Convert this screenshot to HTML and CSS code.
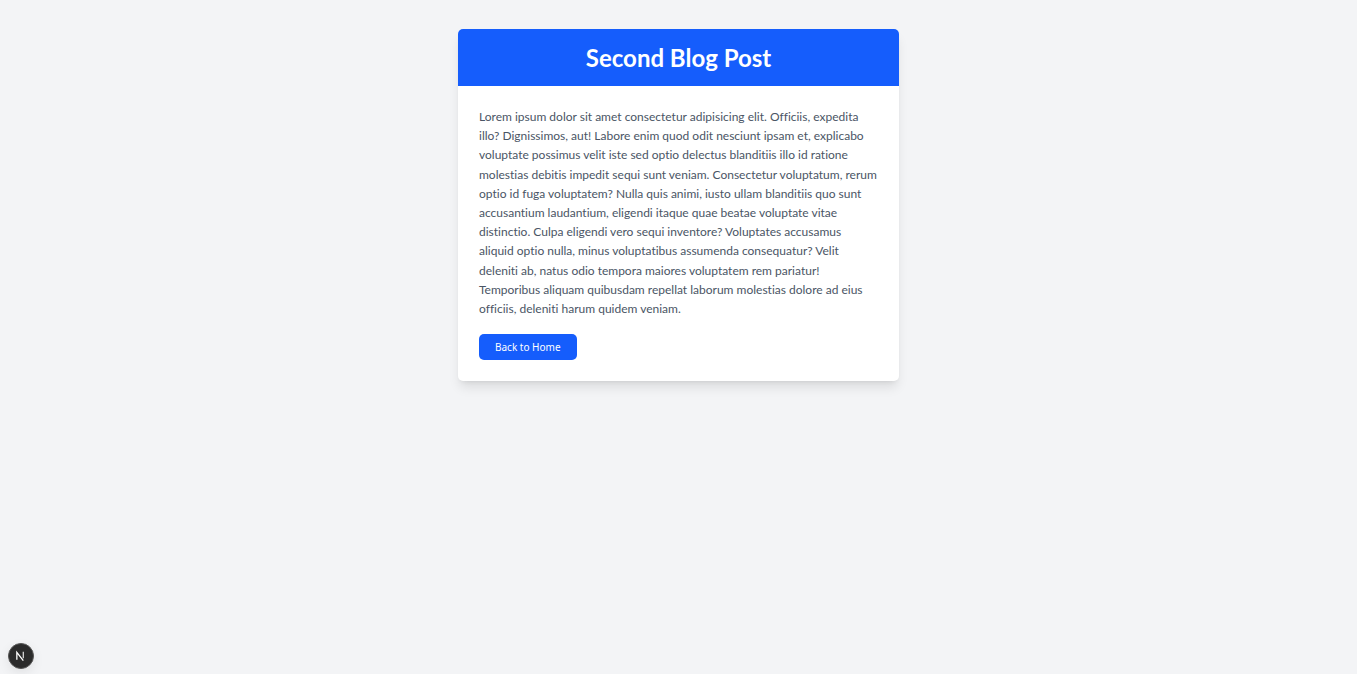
FILE: index.html
```html
<!DOCTYPE html>
<html lang="en">
<head>
<meta charset="utf-8">
<title>Second Blog Post</title>
<link rel="stylesheet" href="styles.css">
</head>
<body>
<main class="page">
  <article class="card">
    <header class="card-header"><h1 class="card-title">Second Blog Post</h1></header>
    <div class="card-body">
      <p class="card-text">Lorem ipsum dolor sit amet consectetur adipisicing elit. Officiis, expedita illo? Dignissimos, aut! Labore enim quod odit nesciunt ipsam et, explicabo voluptate possimus velit iste sed optio delectus blanditiis illo id ratione molestias debitis impedit sequi sunt veniam. Consectetur voluptatum, rerum optio id fuga voluptatem? Nulla quis animi, iusto ullam blanditiis quo sunt accusantium laudantium, eligendi itaque quae beatae voluptate vitae distinctio. Culpa eligendi vero sequi inventore? Voluptates accusamus aliquid optio nulla, minus voluptatibus assumenda consequatur? Velit deleniti ab, natus odio tempora maiores voluptatem rem pariatur! Temporibus aliquam quibusdam repellat laborum molestias dolore ad eius officiis, deleniti harum quidem veniam.</p>
      <a class="home-link" href="#">Back to Home</a>
    </div>
  </article>
</main>
<button class="dev-button" type="button" aria-label="Open developer tools">
  <svg class="dev-icon" viewBox="0 0 26 26" fill="none" aria-hidden="true">
    <path d="M8.5 17V9L15.5 18" stroke="#fff" stroke-width="1.4"/>
    <path d="M15.5 8.500v7" stroke="#fff" stroke-width="1.4" stroke-opacity=".8"/>
  </svg>
</button>
</body>
</html>
```
FILE: styles.css
```css
* { box-sizing: border-box; }
body {
  margin: 0;
  min-height: 100vh;
  background: #f3f4f6;
  font-family: Lato, "Noto Sans", sans-serif;
}
.page { padding: 29px 16px; }
.card {
  max-width: 441px;
  margin: 0 auto;
  overflow: hidden;
  border-radius: 5px;
  background: #fff;
  box-shadow: 0 8px 12px -2px rgb(0 0 0 / 10%), 0 3px 5px -3px rgb(0 0 0 / 10%);
}
.card-header { padding: 13px; background: #155dfc; color: #fff; text-align: center; }
.card-title { margin: 0; font-size: 24px; line-height: 31px; font-weight: 700; }
.card-body { padding: 21px; }
.card-text {
  margin: 0 0 16px;
  color: #4a5565;
  font-size: 12px;
  line-height: 1.6;
  font-variant-ligatures: no-common-ligatures;
}
.home-link {
  display: block;
  width: fit-content;
  padding: 4px 16px;
  border-radius: 5px;
  background: #155dfc;
  color: #fff;
  font-family: "Noto Sans", sans-serif;
  font-size: 10px;
  line-height: 18px;
  text-decoration: none;
}
.dev-button {
  position: fixed;
  left: 8px;
  bottom: 5px;
  width: 26px;
  height: 26px;
  padding: 0;
  border: 1px solid #555;
  border-radius: 50%;
  background: #2b2b2b;
  box-shadow: 0 4px 12px rgb(0 0 0 / 8%);
}
.dev-icon { display: block; width: 100%; height: 100%; }
```
